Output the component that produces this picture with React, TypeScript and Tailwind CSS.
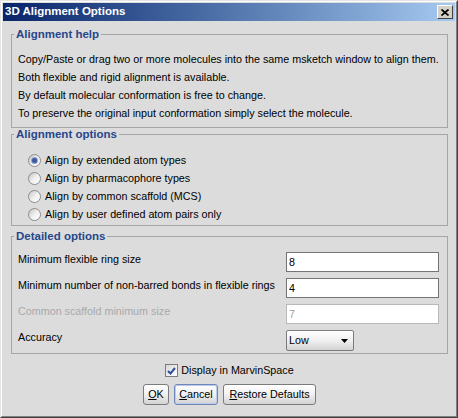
import React from "react"

function Group({ title, className, children }: { title: string; className?: string; children: React.ReactNode }) {
  return (
    <fieldset className={`border border-[#a5a5a5] min-w-0 ${className ?? ""}`}>
      <legend className="ml-[2px] px-[2px] text-[11.5px] leading-[12px] font-bold text-[#27478b]">{title}</legend>
      {children}
    </fieldset>
  )
}

function Radio({ checked, label }: { checked?: boolean; label: string }) {
  return (
    <div className="flex items-center h-[18px]">
      <span className="w-[13px] h-[13px] rounded-full border border-[#8c8c8c] bg-gradient-to-br from-[#c4c4c4] via-[#f0f0f0] to-white flex items-center justify-center">
        {checked && <span className="w-[5px] h-[5px] rounded-full bg-[#3d5c9f] shadow-[0_0_0_1px_#8fa3cc]" />}
      </span>
      <span className="ml-[4px]">{label}</span>
    </div>
  )
}

function Field({ label, value, disabled }: { label: string; value: string; disabled?: boolean }) {
  return (
    <div className="flex items-start h-[20px]">
      <span className={`w-[268px] leading-[14px] ${disabled ? "text-[#a9a9a9]" : ""}`}>{label}</span>
      <input
        readOnly
        disabled={disabled}
        defaultValue={value}
        className={`w-[153px] h-[20px] bg-white pl-[2px] outline-none border ${
          disabled ? "border-[#b9b9b9] text-[#a0a0a0]" : "border-[#747474]"
        }`}
      />
    </div>
  )
}

function Btn({ children, width, focused }: { children: React.ReactNode; width: string; focused?: boolean }) {
  return (
    <button
      className={`${width} h-[21px] rounded-[3px] border bg-gradient-to-b from-white via-[#f0f0f0] to-[#d2d2d2] flex items-center justify-center ${
        focused ? "border-[#7086ba] shadow-[inset_0_0_0_1px_#bccbe8]" : "border-[#7c7c7c]"
      }`}
    >
      {children}
    </button>
  )
}

export default function App() {
  return (
    <div className="w-[458px] h-[418px] border border-t-[#e4e4e4] border-l-[#e4e4e4] border-r-[#404040] border-b-[#404040] font-['Liberation_Sans',Arial,sans-serif] text-[10.75px] text-black">
      <div className="h-full border border-t-white border-l-white border-r-[#808080] border-b-[#808080] bg-[#dcdcdc] p-[1px] flex flex-col">
        {/* Title bar */}
        <div className="h-[18px] flex items-center justify-between pl-[2px] pr-[2px] bg-gradient-to-r from-[#0a246a] to-[#a6caf0]">
          <span className="text-white font-bold text-[11.5px]">3D Alignment Options</span>
          <span className="w-[16px] h-[14px] bg-[#d4d0c8] border border-t-white border-l-white border-r-[#404040] border-b-[#404040] flex items-center justify-center">
            <svg width="8" height="7" viewBox="0 0 8 7">
              <path d="M0.5 0.5 L7.5 6.5 M7.5 0.5 L0.5 6.5" stroke="black" strokeWidth="1.7" />
            </svg>
          </span>
        </div>

        {/* Body */}
        <div className="flex flex-col pl-[8px] pr-[7px] pt-[7px]">
          <Group title="Alignment help" className="h-[100px]">
            <div className="pt-[10px] pl-[6px] leading-[18px]">
              <p>Copy/Paste or drag two or more molecules into the same msketch window to align them.</p>
              <p>Both flexible and rigid alignment is available.</p>
              <p>By default molecular conformation is free to change.</p>
              <p>To preserve the original input conformation simply select the molecule.</p>
            </div>
          </Group>

          <Group title="Alignment options" className="h-[98px]">
            <div className="pt-[11px] pl-[16px]">
              <Radio checked label="Align by extended atom types" />
              <Radio label="Align by pharmacophore types" />
              <Radio label="Align by common scaffold (MCS)" />
              <Radio label="Align by user defined atom pairs only" />
            </div>
          </Group>

          <Group title="Detailed options" className="h-[124px] mt-[4px]">
            <div className="pt-[10px] pl-[6px] flex flex-col gap-[6px]">
              <Field label="Minimum flexible ring size" value="8" />
              <Field label="Minimum number of non-barred bonds in flexible rings" value="4" />
              <Field label="Common scaffold minimum size" value="7" disabled />
              <div className="flex items-start h-[20px]">
                <span className="w-[268px] leading-[14px]">Accuracy</span>
                <div className="w-[68px] h-[21px] rounded-[2px] border border-[#7c7c7c] bg-gradient-to-b from-white via-[#f0f0f0] to-[#d2d2d2] flex items-center justify-between pl-[2px] pr-[5px]">
                  <span>Low</span>
                  <svg width="7" height="4" viewBox="0 0 7 4">
                    <path d="M0 0 H7 L3.5 4 Z" fill="black" />
                  </svg>
                </div>
              </div>
            </div>
          </Group>

          {/* Display checkbox */}
          <div className="mt-[10px] h-[13px] flex items-center justify-center">
            <span className="w-[13px] h-[13px] border border-[#7c7c7c] bg-gradient-to-br from-[#d8d8d8] to-white flex items-center justify-center">
              <svg width="9" height="8" viewBox="0 0 9 8">
                <path d="M1 4 L3.5 6.5 L8 1" stroke="#2f4f9a" strokeWidth="2" fill="none" />
              </svg>
            </span>
            <span className="ml-[3px]">Display in MarvinSpace</span>
          </div>

          {/* Buttons */}
          <div className="mt-[7px] flex justify-center gap-[5px]">
            <Btn width="w-[26px]">
              <span><span className="underline">O</span>K</span>
            </Btn>
            <Btn width="w-[44px]" focused>
              <span><span className="underline">C</span>ancel</span>
            </Btn>
            <Btn width="w-[93px]">
              <span><span className="underline">R</span>estore Defaults</span>
            </Btn>
          </div>
        </div>
      </div>
    </div>
  )
}
